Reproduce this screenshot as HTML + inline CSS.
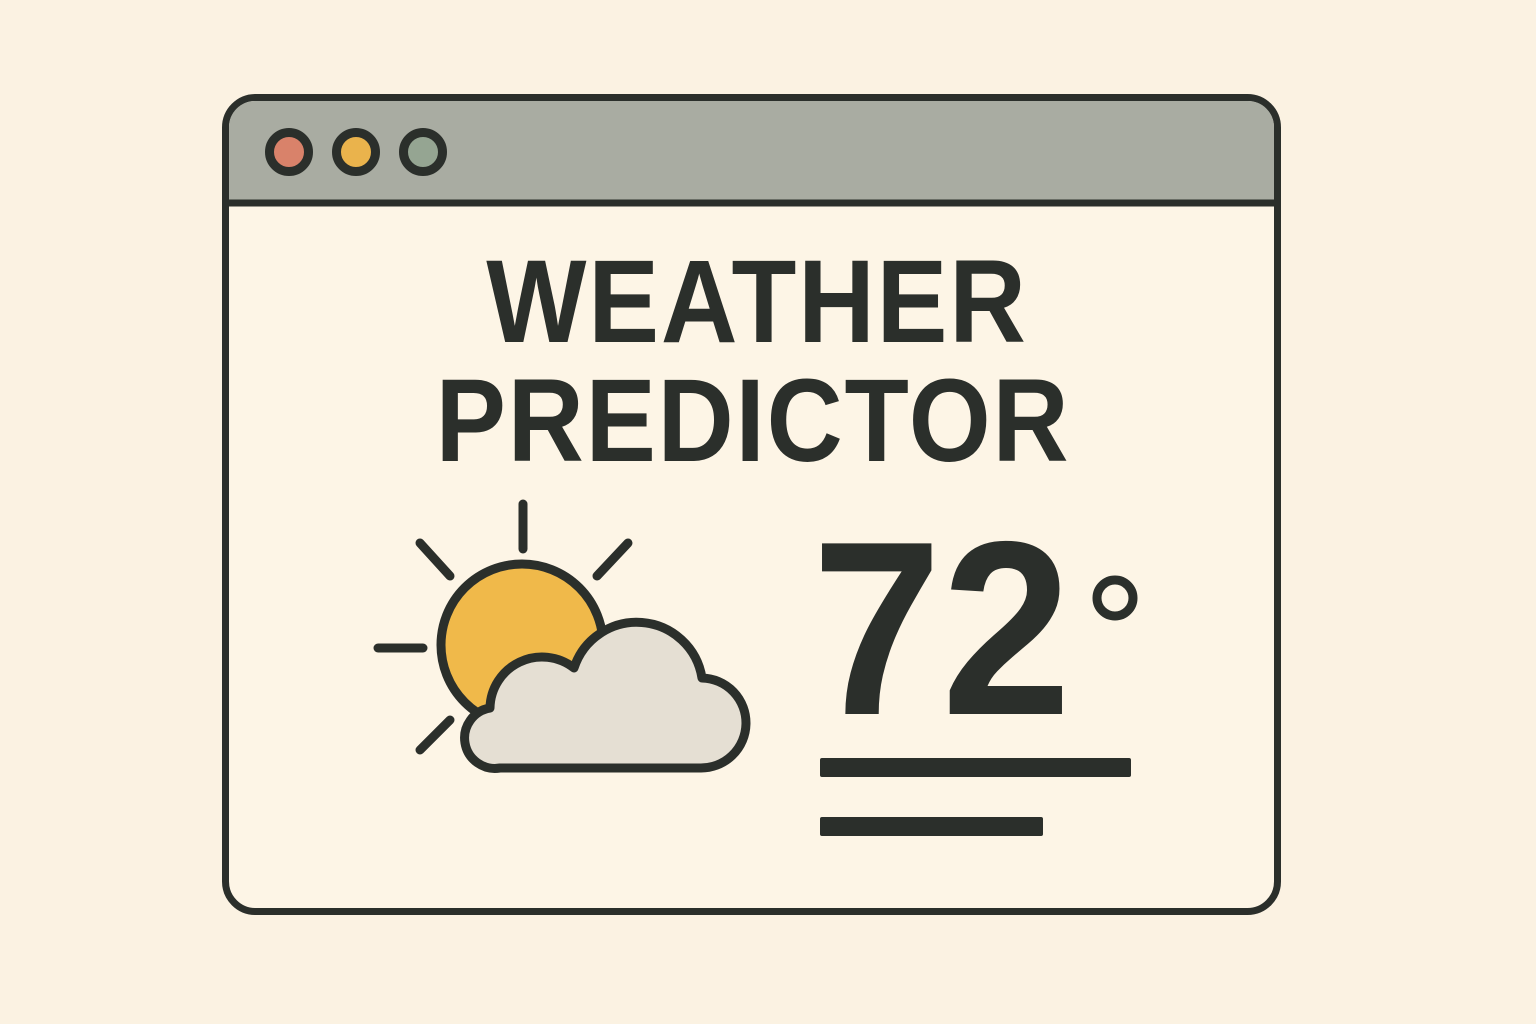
<!DOCTYPE html>
<html><head><meta charset="utf-8"><style>
html,body{margin:0;padding:0;}
body{width:1536px;height:1024px;background:#fbf2e2;overflow:hidden;position:relative;font-family:"Liberation Sans",sans-serif;}
.t{position:absolute;left:0;width:1536px;text-align:center;color:#2b2f2b;font-weight:bold;white-space:nowrap;transform-origin:center;}
</style></head><body>
<svg width="1536" height="1024" style="position:absolute;left:0;top:0">
  <rect x="225.5" y="97.5" width="1052" height="814" rx="30" fill="#fdf5e6" stroke="#2b2f2b" stroke-width="7"/>
  <path d="M229 203 V127 A26 26 0 0 1 255 101 H1247 A26 26 0 0 1 1274 127 V203 Z" fill="#a9aca2"/>
  <line x1="225" y1="203" x2="1278" y2="203" stroke="#2b2f2b" stroke-width="7"/>
  <circle cx="289" cy="152" r="19.5" fill="#d9826a" stroke="#2b2f2b" stroke-width="9"/>
  <circle cx="356" cy="152" r="19.5" fill="#eab34c" stroke="#2b2f2b" stroke-width="9"/>
  <circle cx="423" cy="152" r="19.5" fill="#95a592" stroke="#2b2f2b" stroke-width="9"/>
  <g stroke="#2b2f2b" stroke-width="9" stroke-linecap="round" fill="none">
    <line x1="523" y1="504" x2="523" y2="549"/>
    <line x1="378" y1="648" x2="423" y2="648"/>
    <line x1="420" y1="543" x2="450" y2="576"/>
    <line x1="628" y1="543" x2="597" y2="576"/>
    <line x1="450" y1="720" x2="420" y2="750"/>
  </g>
  <circle cx="522" cy="645" r="81" fill="#f0b94a" stroke="#2b2f2b" stroke-width="9"/>
  <path d="M500 768 H700 A45 45 0 0 0 702 678 A66 66 0 0 0 574 668 A52 52 0 0 0 490 708 A30 30 0 0 0 500 768 Z" fill="#e5dfd3" stroke="#2b2f2b" stroke-width="9" stroke-linejoin="round"/>
  <rect x="820" y="758" width="311" height="19" rx="2" fill="#2b2f2b"/>
  <rect x="820" y="817" width="223" height="19" rx="2" fill="#2b2f2b"/>
  <circle cx="1115" cy="598" r="18" fill="none" stroke="#2b2f2b" stroke-width="9"/>
</svg>
<div class="t" style="top:240px;font-size:118px;line-height:124px;letter-spacing:2px;left:-11px;transform:scaleX(0.9)">WEATHER</div>
<div class="t" style="top:359px;font-size:118px;line-height:124px;letter-spacing:2px;left:-15px;transform:scaleX(0.893)">PREDICTOR</div>
<div style="position:absolute;left:812px;top:498px;font-size:248px;line-height:260px;font-weight:bold;color:#2b2f2b;transform:scaleX(0.94);transform-origin:left center">72</div>
</body></html>
